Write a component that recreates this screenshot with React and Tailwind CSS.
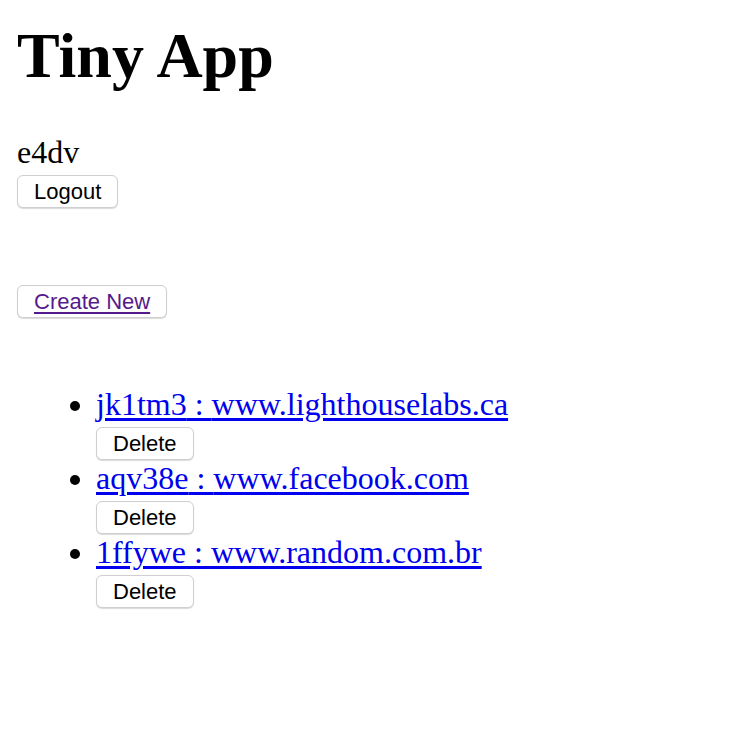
import React from 'react';

const urls = [
  { id: 'jk1tm3', long: 'www.lighthouselabs.ca' },
  { id: 'aqv38e', long: 'www.facebook.com' },
  { id: '1ffywe', long: 'www.random.com.br' },
];

const btn = "h-[33px] px-[16px] bg-white border border-[#cfcfcf] rounded-[6px] shadow-[0_1px_1px_rgba(0,0,0,0.15)] text-[22px] leading-none text-black font-['Liberation_Sans',Arial,sans-serif]";

export default function App() {
  return (
    <div className="min-h-[734px] bg-white pl-[17px] font-['Liberation_Serif','Times_New_Roman',serif] text-black">
      <h1 className="pt-[24px] text-[64px] leading-none font-bold">Tiny App</h1>

      {/* User */}
      <div className="mt-[46px] text-[32px] leading-[37px]">e4dv</div>
      <div className="mt-[4px] flex">
        <button className={btn}>Logout</button>
      </div>

      <div className="mt-[77px] flex">
        <button className={btn}>
          <a href="#" className="text-[#551A8B] underline underline-offset-[3px]">Create New</a>
        </button>
      </div>

      {/* URL list */}
      <ul className="mt-[68px] pl-[79px] list-disc text-[32px] leading-[37px]">
        {urls.map(u => (
          <li key={u.id}>
            <a href="#" className="text-[#0000EE] underline underline-offset-[3px]">{u.id} : {u.long}</a>
            <div className="mt-[4px] flex">
              <button className={btn}>Delete</button>
            </div>
          </li>
        ))}
      </ul>
    </div>
  );
}
